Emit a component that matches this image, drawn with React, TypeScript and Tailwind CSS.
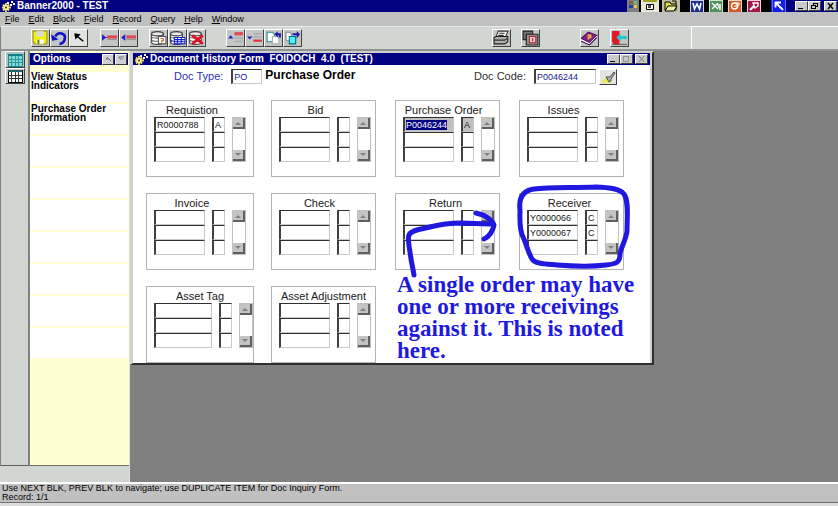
import { useEffect, useRef, type ReactNode } from "react";

const MENUS = ["File", "Edit", "Block", "Field", "Record", "Query", "Help", "Window"];

const OPTIONS = ["View Status Indicators", "Purchase Order Information", "", "", "", "", "", "", ""];

interface Group {
  title: string;
  titlePad: string;
  rows: [string, string][];
  wide?: boolean;
  current?: boolean;
  first?: boolean;
}

const EMPTY: [string, string] = ["", ""];

const GROUPS: Group[] = [
  { title: "Requistion", titlePad: "pr-4", rows: [["R0000788", "A"], EMPTY, EMPTY], first: true },
  { title: "Bid", titlePad: "pr-4", rows: [EMPTY, EMPTY, EMPTY] },
  { title: "Purchase Order", titlePad: "pr-2", rows: [["P0046244", "A"], EMPTY, EMPTY], current: true },
  { title: "Issues", titlePad: "pr-4", rows: [EMPTY, EMPTY, EMPTY] },
  { title: "Invoice", titlePad: "pr-4", rows: [EMPTY, EMPTY, EMPTY], first: true },
  { title: "Check", titlePad: "pr-2", rows: [EMPTY, EMPTY, EMPTY] },
  { title: "Return", titlePad: "pr-1", rows: [EMPTY, EMPTY, EMPTY] },
  { title: "Receiver", titlePad: "pr-1", rows: [["Y0000066", "C"], ["Y0000067", "C"], EMPTY] },
  { title: "Asset Tag", titlePad: "pr-0", rows: [EMPTY, EMPTY, EMPTY], wide: true, first: true },
  { title: "Asset Adjustment", titlePad: "pr-0", rows: [EMPTY, EMPTY, EMPTY] },
];

const SUNKEN = "border-t border-l-2 border-r border-b border-t-[#303030] border-l-[#404040] border-r-[#c8c8c8] border-b-[#c8c8c8]";
const RAISED = "border border-t-white border-l-white border-r-[#404040] border-b-[#404040]";

function Gear() {
  return (
    <svg width="13" height="11" viewBox="0 0 13 11" className="shrink-0">
      <path d="M4 2v9M0 6.500h9M1 3.500l6 6M7 3.500l-6 6" stroke="#f0dc60" strokeWidth="1.800" />
      <circle cx="4" cy="6.500" r="2.600" fill="#f8f0a0" />
      <circle cx="4" cy="6.500" r="1" fill="#303030" />
      <path d="M5 1h2v2H5zM9 0h2v2H9zM8 3h2v2H8zM11 2h2v2h-2z" fill="#fff" />
    </svg>
  );
}

function WinButton({ label, children }: { label: string; children: ReactNode }) {
  return (
    <button aria-label={label} className={`flex h-[10px] w-[13px] items-center justify-center bg-[#c8c8c8] ${RAISED}`}>
      <svg width="9" height="8" viewBox="0 0 9 8" fill="none" stroke="#000" shapeRendering="crispEdges">
        {children}
      </svg>
    </button>
  );
}

function ToolButton({ label, children }: { label: string; children: ReactNode }) {
  return (
    <button aria-label={label} title={label} className={`flex h-[18px] w-[19px] items-center justify-center bg-[#c4c6c4] ${RAISED}`}>
      <svg width="17" height="16" viewBox="0 0 16 15" fill="none" className="shrink-0">
        {children}
      </svg>
    </button>
  );
}

function Database() {
  return (
    <>
      <path d="M1.500 3.500v8c0 1 2 2 5.500 2s5.500-1 5.500-2v-8z" fill="#fff" stroke="#404040" />
      <ellipse cx="7" cy="3.500" rx="5.500" ry="2" fill="#e8e8e8" stroke="#404040" />
      <path d="M1.500 6.500c1 1.500 10 1.500 11 0M1.500 9.500c1 1.500 10 1.500 11 0" stroke="#606060" />
    </>
  );
}

function TaskIcon({ label, className, children }: { label: string; className: string; children: ReactNode }) {
  return (
    <button aria-label={label} className={`flex h-3 items-center justify-center overflow-hidden ${className}`}>
      <svg width="14" height="12" viewBox="0 0 14 12" fill="none" className="shrink-0">
        {children}
      </svg>
    </button>
  );
}

function TitleBar() {
  return (
    <header className="flex h-3 items-center bg-[#000080] pl-[2px]">
      <Gear />
      <h1 className="pl-[2px] text-[10px] leading-3 font-bold text-white">Banner2000 - TEST</h1>
      <div className="ml-auto flex h-3 items-center bg-black">
        <TaskIcon label="Windows" className="w-3 bg-[#808080]">
          <path d="M3 1h4v3H3z" fill="#806040" />
          <path d="M8 1h3v3H8z" fill="#70c080" />
          <path d="M3 5h4v3H3z" fill="#2040a0" />
          <path d="M8 5h3v3H8z" fill="#e0d040" />
        </TaskIcon>
        <TaskIcon label="Office" className="ml-[2px] w-[18px] bg-[#e8e8d8]">
          <path d="M0 0h14v2H0z" fill="#a0a020" />
          <path d="M3.500 4.500h7v5h-7z" fill="#fff" stroke="#000" />
          <path d="M5 5h3v3H5z" fill="#505040" />
        </TaskIcon>
        <TaskIcon label="Open document" className="ml-[3px] w-[18px] bg-[#c0c0a0]">
          <path d="M1 2h5l1 2h5v6H1z" fill="#e0d850" stroke="#000" />
          <path d="M4 6h9l-3 5H1z" fill="#f0f0a0" stroke="#000" />
          <path d="M8 1h4v3" stroke="#000" />
        </TaskIcon>
        <TaskIcon label="Word" className="ml-[10px] w-[14px] bg-[#203090]">
          <path d="M0 .5h14M.5 0v12M13.500 0v12" stroke="#d0d0e8" />
          <path d="M3 3l1.500 6L7 4l2.500 5L11 3" stroke="#fff" strokeWidth="1.600" />
        </TaskIcon>
        <TaskIcon label="Excel" className="ml-[5px] w-[14px] bg-[#50905c]">
          <path d="M0 .5h14M.5 0v12M13.500 0v12" stroke="#d0e8d0" />
          <path d="M3 3l6 6M9 3L3 9M8 5h4M9 7h3M10 9h2" stroke="#fff" strokeWidth="1.400" />
        </TaskIcon>
        <TaskIcon label="PowerPoint" className="ml-[5px] w-[14px] bg-[#d05c28]">
          <path d="M0 .5h14M.5 0v12M13.500 0v12" stroke="#f0d8c8" />
          <circle cx="6.500" cy="6" r="3" stroke="#fff" strokeWidth="1.400" />
          <path d="M6 6h5M8 3h3v2" stroke="#fff" strokeWidth="1.200" />
        </TaskIcon>
        <TaskIcon label="Access" className="ml-[5px] w-[14px] bg-[#a01848]">
          <path d="M0 .5h14M.5 0v12M13.500 0v12" stroke="#f0d0e0" />
          <path d="M3 10l4-4" stroke="#fff" strokeWidth="2" />
          <path d="M6 3h5v3l-3 2z" stroke="#fff" strokeWidth="1.400" />
        </TaskIcon>
        <TaskIcon label="Shortcut" className="ml-[10px] w-[15px] bg-[#1020e8]">
          <path d="M4 3l7 7M3.500 7.500V2.500H9" stroke="#fff" strokeWidth="1.800" />
          <path d="M.5 0v12M13.500 0v12" stroke="#6070f0" />
        </TaskIcon>
      </div>
      <div className="ml-[9px] flex">
        <WinButton label="Minimize"><path d="M1 6.500h5" /></WinButton>
        <WinButton label="Restore"><path d="M3.500 3V1.500h4v3H6M1.500 3.500h4v3h-4z" /></WinButton>
      </div>
      <div className="ml-[3px] pr-px">
        <WinButton label="Close"><path d="M2 1l5 6M7 1L2 7" strokeWidth="1.400" shapeRendering="auto" /></WinButton>
      </div>
    </header>
  );
}

function MenuBar() {
  return (
    <nav className="flex h-[14px] items-center gap-[9px] bg-[#c0c0c0] pl-[5px]">
      {MENUS.map((m) => (
        <button key={m} className="text-[9px] leading-3 text-black">
          <span className="underline">{m[0]}</span>{m.slice(1)}
        </button>
      ))}
    </nav>
  );
}

function Toolbar() {
  return (
    <div className="flex h-[25px] border-b-2 border-b-[#909290] bg-[#d2d6d2]">
      <div className="flex w-[691px] items-center border-t border-l border-t-[#e8ebe8] border-l-[#808080] pl-[30px]">
        <ToolButton label="Save">
          <path d="M1 1h13v12H3l-2-2z" fill="#f0f010" stroke="#a0a000" />
          <path d="M4 1h7v5H4z" fill="#d8d8d8" />
          <path d="M4 9h7v4H4z" fill="#fff" />
          <path d="M5 9h2v4H5z" fill="#808000" />
        </ToolButton>
        <ToolButton label="Undo">
          <path d="M4 6c3-5 10-3 9 2 0 3-3 5-5 5" stroke="#1010c8" strokeWidth="2.500" />
          <path d="M0 4l1 6 6-1z" fill="#1010c8" />
        </ToolButton>
        <ToolButton label="Select">
          <path d="M0 0h16v15H0z" fill="#e2e4e2" />
          <path d="M4 3l6 1-2 2 5 4-1 1-5-4-2 2z" fill="#000" />
        </ToolButton>
        <div className="w-3" />
        <ToolButton label="Previous field">
          <path d="M1 4l4 3-4 3zM5 6.500h3v1H5z" fill="#2020d0" />
          <path d="M6 5h9v3H6z" fill="#e04858" />
          <path d="M6 9h9" stroke="#909090" />
        </ToolButton>
        <ToolButton label="Next field">
          <path d="M5 4L1 7l4 3z" fill="#2020d0" />
          <path d="M6 5h9v3H6z" fill="#e04858" />
          <path d="M6 9h9" stroke="#909090" />
        </ToolButton>
        <div className="w-[11px]" />
        <ToolButton label="Enter query">
          <Database />
          <path d="M8 6h7v7H8z" fill="#fff" stroke="#505050" />
          <path d="M10 8h2.500v2H11v2" stroke="#c06020" />
        </ToolButton>
        <ToolButton label="Execute query">
          <Database />
          <path d="M5 7h10v6H5z" fill="#fff" stroke="#1020c8" />
          <path d="M5 9h10M5 11h10M8 7v6M11.500 7v6M3 11L1 9" stroke="#1020c8" />
        </ToolButton>
        <ToolButton label="Cancel query">
          <Database />
          <path d="M4 5l10 8M14 5l-10 8" stroke="#e01020" strokeWidth="2.500" />
        </ToolButton>
        <div className="w-5" />
        <ToolButton label="Previous record">
          <path d="M1 8l2.500-3L6 8z" fill="#2020d0" />
          <path d="M7 2h8v3H7z" fill="#e04858" />
          <path d="M7 7.500h8M7 10.500h8" stroke="#a0a0a0" />
        </ToolButton>
        <ToolButton label="Next record">
          <path d="M1 6h5L3.500 9z" fill="#2020d0" />
          <path d="M7 9h8v2H7z" fill="#e03040" />
          <path d="M7 3.500h8M7 6.500h8" stroke="#a0a0a0" />
        </ToolButton>
        <ToolButton label="Previous block">
          <path d="M2 2h5l2 2v7H2z" fill="#fff" stroke="#209090" />
          <path d="M7 6h6v7H7z" fill="#f4ffff" stroke="#b0b0b0" />
          <path d="M9 4l3-3v2h3v4h-2V5h-1v2z" fill="#1818b0" />
        </ToolButton>
        <ToolButton label="Next block">
          <path d="M2 2h4l1 2v6H2z" fill="#fff" stroke="#909090" />
          <path d="M5 6h6v7H5z" fill="#50f0f8" stroke="#007080" />
          <path d="M8 3h4V1l3 3-3 4V5H8z" fill="#1818b0" />
        </ToolButton>
        <div className="w-[190px]" />
        <ToolButton label="Print">
          <path d="M5 1h9l-2 5H3z" fill="#fff" stroke="#303030" />
          <path d="M1 7l2-1h11v5l-3 2H1z" fill="#b0b0a8" stroke="#202020" />
          <path d="M1 9.500h10l3-2M6 3h5M5 5h5" stroke="#303030" />
        </ToolButton>
        <div className="w-[10px]" />
        <ToolButton label="Copy screen">
          <path d="M1 1h9v8H1z" fill="#707070" stroke="#202020" />
          <path d="M4 4h11v10H4z" fill="#909090" stroke="#202020" />
          <path d="M7 6h6v6H7z" fill="#e8c8c8" stroke="#b02030" />
          <path d="M10 7.500v3" stroke="#b02030" />
        </ToolButton>
        <div className="w-10" />
        <ToolButton label="Help">
          <path d="M0 8l7-6 8 3-7 7z" fill="#802088" stroke="#501060" />
          <path d="M0 9l8 4 7-7" stroke="#fff" />
          <path d="M0 10.500l8 3.500 7-7" stroke="#400850" />
          <path d="M6 5h3v2H7v2" stroke="#f0c030" strokeWidth="1.500" />
        </ToolButton>
        <div className="w-[11px]" />
        <ToolButton label="Exit">
          <path d="M1 1h7v13H3l-2-3z" fill="#e81820" />
          <path d="M5 7l4-4v2.500h6v3H9V11z" fill="#20c8d0" />
          <path d="M1 13.500h14" stroke="#606060" />
        </ToolButton>
      </div>
      <div className="flex-1 border-t border-l border-white" />
    </div>
  );
}

function Grid({ on }: { on?: boolean }) {
  return (
    <svg width="16" height="14" viewBox="0 0 16 14" shapeRendering="crispEdges" className="shrink-0">
      <path d="M1 1h14v12H1z" fill={on ? "#80d8d8" : "#fff"} stroke={on ? "#208888" : "#000"} />
      <path d="M1 1h14v2H1z" fill={on ? "#108080" : "#206868"} />
      <path d="M1 6.500h14M1 9.500h14M4.500 3v10M8.500 3v10M11.500 3v10" stroke={on ? "#309898" : "#303838"} />
    </svg>
  );
}

function SideRail() {
  return (
    <div className="flex w-[30px] flex-col items-end border-r-2 border-b border-l border-r-[#808480] border-b-[#606060] border-l-[#808080] bg-[#d2d6d2] pr-[3px]">
      <button aria-label="Options view" className={`flex h-[17px] w-5 items-center justify-center bg-[#a8c4c4] ${RAISED}`}><Grid on /></button>
      <button aria-label="Table view" className={`flex h-4 w-5 items-center justify-center bg-[#c4c8c4] ${RAISED}`}><Grid /></button>
    </div>
  );
}

function OptionsPanel() {
  return (
    <aside className="flex flex-1 flex-col border-b border-b-[#707060] bg-[#ffffd2] pt-[2px] pr-px">
      <div className="flex h-3 items-center bg-[#000080] pl-[3px]">
        <h2 className="text-[10px] leading-3 font-bold text-white">Options</h2>
        <button aria-label="Collapse" className={`ml-auto flex h-[11px] w-3 items-center justify-center bg-[#d0d0d0] ${RAISED}`}>
          <svg width="7" height="6" viewBox="0 0 7 6" fill="none"><path d="M1 3h3l2 2M3 1L1 3" stroke="#707070" /></svg>
        </button>
        <button aria-label="Expand" className={`mr-px ml-px flex h-[11px] w-3 items-center justify-center bg-[#d0d0d0] ${RAISED}`}>
          <svg width="7" height="6" viewBox="0 0 7 6" fill="none"><path d="M1 1h5M1 1l2 3M4 3h1" stroke="#707070" /></svg>
        </button>
      </div>
      <ul className="pt-[7px]">
        {OPTIONS.map((o, i) => (
          <li key={i} className="h-8 border-b-2 border-b-[#ffffd2] bg-white">
            {o && <button className="block w-24 pl-px text-left text-[10px] leading-[9px] font-bold text-black">{o}</button>}
          </li>
        ))}
      </ul>
    </aside>
  );
}

function ScrollBar() {
  return (
    <div className="flex h-[45px] w-[14px] flex-col justify-between border border-[#c0c0c0] bg-white">
      <button aria-label="Scroll up" className="flex h-[11px] items-center justify-center border-r-2 border-b-2 border-r-[#606060] border-b-[#606060] bg-[#c4c4c4]">
        <svg width="6" height="4" viewBox="0 0 6 4"><path d="M0 4l3-3 3 3z" fill="#808080" /></svg>
      </button>
      <button aria-label="Scroll down" className="flex h-[11px] items-center justify-center border-r-2 border-b-2 border-r-[#606060] border-b-[#606060] bg-[#c4c4c4]">
        <svg width="6" height="4" viewBox="0 0 6 4"><path d="M0 0h6L3 3z" fill="#808080" /></svg>
      </button>
    </div>
  );
}

function GroupBox({ group }: { group: Group }) {
  const currentRef = useRef<HTMLInputElement>(null);

  // the cursor starts in the current block with its value selected
  useEffect(() => {
    if (group.current) currentRef.current?.select();
  }, [group.current]);

  return (
    <section className={`h-[77px] border border-[#b4b4b4] pt-[2px] pl-[7px] ${group.first ? "w-[108px]" : "w-[105px]"}`}>
      <h3 className={`-ml-[7px] text-center text-[11px] leading-[14px] whitespace-nowrap text-[#202020] ${group.titlePad}`}>{group.title}</h3>
      <div className="flex gap-[7px]">
        {[0, 1].map((col) => (
          <div key={col}>
            {group.rows.map((row, i) => (
              <input
                key={i}
                ref={col === 0 && i === 0 ? currentRef : undefined}
                aria-label={`${group.title} ${col === 0 ? "number" : "status"} ${i + 1}`}
                defaultValue={row[col]}
                className={`block h-[15px] pl-px text-[9px] leading-3 text-[#202020] outline-none selection:bg-[#000080] selection:text-white ${SUNKEN} ${
                  col === 1 ? "w-[13px]" : group.wide ? "w-[58px]" : "w-[51px]"
                } ${group.current && i === 0 ? "bg-[#c0c0c0]" : "bg-white"}`}
              />
            ))}
          </div>
        ))}
        <ScrollBar />
      </div>
    </section>
  );
}

function Annotation() {
  return (
    <>
      <svg className="pointer-events-none absolute inset-0" width="519" height="310" fill="none" stroke="#2118e0" strokeWidth="5" strokeLinecap="round" strokeLinejoin="round">
        <g transform="translate(-133 -53)">
          <path d="M414 275L411 259C410 250 407 240 409 235C411 230 422 229 430 227C442 224 448 223 460 223L490 224" />
          <path d="M476 213C486 215 493 221 494 225C493 231 489 237 484 239" />
          <path d="M534 189C550 187 570 188 597 187C608 188 619 188 624 194C629 201 627 217 627 231C626 240 621 247 620 254C620 262 617 264 606 265C590 267 570 266 557 265C546 264 535 264 532 259C528 252 526 243 523 237C519 229 520 219 520 210C519 202 520 191 534 189" />
        </g>
      </svg>
      <p className="absolute top-[221px] left-[264px] font-['Liberation_Serif','Times_New_Roman',serif] text-[23px] leading-[22px] font-bold whitespace-nowrap text-[#2118e0]">
        A single order may have<br />
        one or more receivings<br />
        against it. This is noted<br />
        here.
      </p>
    </>
  );
}

function DocumentWindow() {
  return (
    <div className="relative w-[524px] border-t-2 border-r-2 border-b-2 border-l-[3px] border-t-[#d0d0d0] border-r-[#303030] border-b-[#303030] border-l-[#d0d0d0] bg-white">
      <div className="flex h-3 items-center border-r-2 border-r-[#d0d0d0] bg-[#000080] pl-[2px]">
        <Gear />
        <h2 className="pl-[2px] text-[10px] leading-3 font-bold whitespace-pre text-white">Document History Form  FOIDOCH  4.0  (TEST)</h2>
        <div className="ml-auto flex">
          <WinButton label="Minimize form"><path d="M1 6.500h5" /></WinButton>
          <WinButton label="Maximize form"><path d="M1.500 1.500h5v5h-5z" stroke="#909090" /></WinButton>
        </div>
        <div className="mr-[2px] ml-[2px]">
          <WinButton label="Close form"><path d="M2 1l5 6M7 1L2 7" stroke="#808080" shapeRendering="auto" /></WinButton>
        </div>
      </div>

      <div className="border-r-2 border-r-[#d0d0d0] pl-[13px]">
        <div className="flex h-[35px] items-start pt-1 pl-[28px]">
          <label htmlFor="doc-type" className="text-[11px] leading-[15px] text-[#3030b8]">Doc Type:</label>
          <input id="doc-type" defaultValue="PO" className={`ml-2 h-[15px] w-[31px] pl-px text-[9px] text-[#202090] outline-none ${SUNKEN}`} />
          <span className="pl-[3px] text-[12px] leading-3 font-bold text-black">Purchase Order</span>
          <label htmlFor="doc-code" className="ml-auto text-[11px] leading-[15px] text-[#303030]">Doc Code:</label>
          <input id="doc-code" defaultValue="P0046244" className={`ml-2 h-[15px] w-[62px] pl-px text-[9px] text-[#202090] outline-none ${SUNKEN}`} />
          <button aria-label="Search" className={`mr-[33px] ml-[3px] flex h-4 w-[18px] items-center justify-center bg-[#e4e4e4] ${RAISED}`}>
            <svg width="15" height="13" viewBox="0 0 15 13">
              <path d="M1 12c0-3 3-5 5-5l3 3v2z" fill="#f0e850" />
              <path d="M5 6h4l4-5 1 1-4 6v2L8 11z" fill="#b0b0b0" stroke="#505050" />
            </svg>
          </button>
        </div>
        <div className="grid grid-cols-[105px_104px_104px_104px] gap-x-5 gap-y-4">
          {GROUPS.map((g) => <GroupBox key={g.title} group={g} />)}
        </div>
      </div>

      <Annotation />
    </div>
  );
}

export default function App() {
  return (
    <div className="flex h-screen flex-col overflow-hidden bg-[#808080] font-['Liberation_Sans',Arial,sans-serif]">
      <TitleBar />
      <MenuBar />
      <Toolbar />
      <main className="flex min-h-0 flex-1">
        <div className="flex w-[130px] flex-col border-r border-r-[#e0e0e0] bg-[#d2d6d2] pb-4">
          <div className="flex flex-1">
            <SideRail />
            <OptionsPanel />
          </div>
        </div>
        <div className="flex flex-1 items-start">
          <DocumentWindow />
        </div>
      </main>
      <footer className="border-t-2 border-t-white bg-[#c0c0c0] pl-[2px] text-[9px] leading-[9px] text-black">
        <p>Use NEXT BLK, PREV BLK to navigate; use DUPLICATE ITEM for Doc Inquiry Form.</p>
        <p>Record: 1/1</p>
        <div className="-ml-[2px] h-1 border-t border-t-[#707070] bg-[#dcdcdc]" />
      </footer>
    </div>
  );
}
